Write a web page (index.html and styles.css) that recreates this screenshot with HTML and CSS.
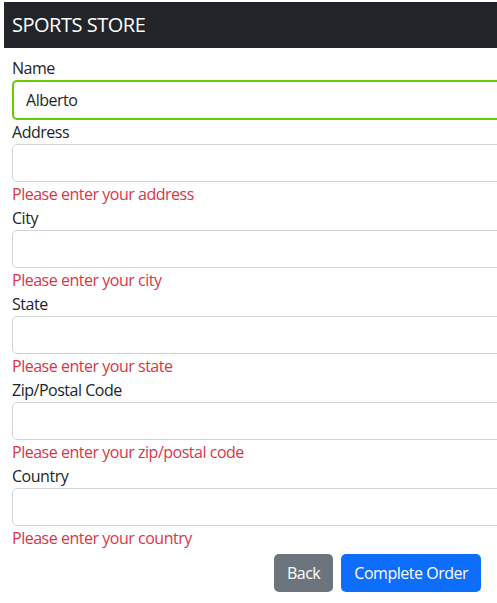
FILE: index.html
```html
<!DOCTYPE html>
<html>
<head>
<meta charset="utf-8">
<link rel="stylesheet" href="styles.css">
</head>
<body>
<div class="navbar"><span class="brand">SPORTS STORE</span></div>
<form class="checkout">
  <div class="group">
    <label class="label">Name</label>
    <input class="field valid" value="Alberto">
  </div>
  <div class="group">
    <label class="label">Address</label>
    <input class="field">
    <div class="error">Please enter your address</div>
  </div>
  <div class="group">
    <label class="label">City</label>
    <input class="field">
    <div class="error">Please enter your city</div>
  </div>
  <div class="group">
    <label class="label">State</label>
    <input class="field">
    <div class="error">Please enter your state</div>
  </div>
  <div class="group">
    <label class="label">Zip/Postal Code</label>
    <input class="field">
    <div class="error">Please enter your zip/postal code</div>
  </div>
  <div class="group">
    <label class="label">Country</label>
    <input class="field">
    <div class="error">Please enter your country</div>
  </div>
  <div class="actions">
    <button type="button" class="btn btn-secondary">Back</button>
    <button type="button" class="btn btn-primary">Complete Order</button>
  </div>
</form>
</body>
</html>
```
FILE: styles.css
```css
html, body {
  margin: 0;
  padding: 0;
  overflow: hidden;
  background: #fff;
}
body {
  font-family: "Open Sans", "Noto Sans", sans-serif;
  font-size: 16px;
  line-height: 24px;
  letter-spacing: -0.03em;
  color: #212529;
  width: 760px;
}
.navbar {
  margin: 2px 0 0 4px;
  height: 46px;
  background: #212529;
  display: flex;
  align-items: center;
  padding: 0 8px;
}
.brand {
  color: #fff;
  font-size: 20px;
  line-height: 30px;
}
.checkout {
  width: 731px;
  padding: 8px 12px 0 12px;
}
.group {
  display: flex;
  flex-direction: column;
}
.label {
  display: block;
  height: 24px;
}
.field {
  box-sizing: border-box;
  width: 100%;
  height: 38px;
  border: 1px solid #ced4da;
  border-radius: 5px;
  padding: 6px 12px;
  font: inherit;
  letter-spacing: inherit;
  color: #212529;
  margin: 0;
  outline: none;
}
.field.valid {
  height: 40px;
  border: 2px solid #66cc00;
}
.error {
  color: #dc3545;
  height: 24px;
}
.actions {
  display: flex;
  justify-content: center;
  gap: 8px;
  padding-top: 4px;
}
.btn {
  height: 38px;
  border: 1px solid transparent;
  border-radius: 5px;
  padding: 0 12px;
  font: inherit;
  letter-spacing: inherit;
  color: #fff;
  cursor: pointer;
}
.btn-secondary {
  background: #6c757d;
}
.btn-primary {
  background: #0d6efd;
}
```
